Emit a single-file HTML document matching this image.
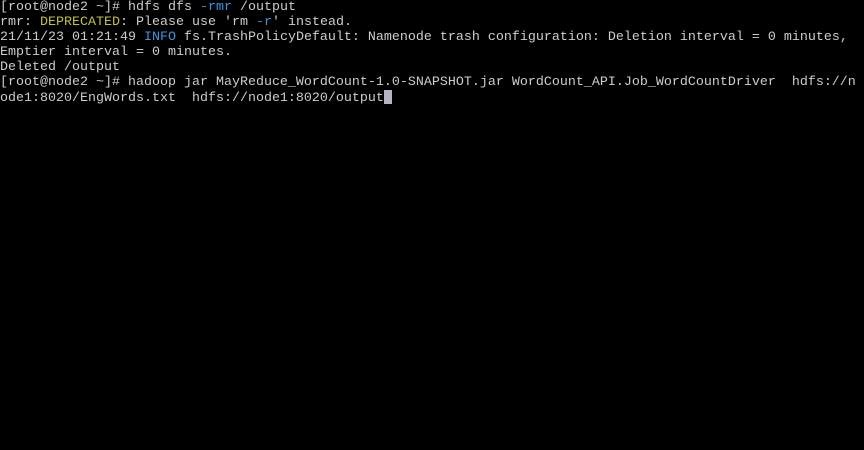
<!DOCTYPE html>
<html><head><meta charset="utf-8"><style>
html,body{margin:0;padding:0;background:#000;width:864px;height:450px;overflow:hidden}
pre{margin:0;padding:0 0 0 0;font-family:"Liberation Mono","DejaVu Sans Mono",monospace;font-size:13.33px;line-height:15px;color:#cccccc;white-space:pre;position:relative;top:0}
.y{color:#c1c13a}.b{color:#3a96dd}
.c{display:inline-block;width:8px;height:14px;background:#b4b4c0;vertical-align:-3px}
</style></head><body><pre>[root@node2 ~]# hdfs dfs <span class="b">-rmr</span> /output
rmr: <span class="y">DEPRECATED</span>: Please use 'rm <span class="b">-r</span>' instead.
21/11/23 01:21:49 <span class="b">INFO</span> fs.TrashPolicyDefault: Namenode trash configuration: Deletion interval = 0 minutes,
Emptier interval = 0 minutes.
Deleted /output
[root@node2 ~]# hadoop jar MayReduce_WordCount-1.0-SNAPSHOT.jar WordCount_API.Job_WordCountDriver  hdfs://n
ode1:8020/EngWords.txt  hdfs://node1:8020/output<span class="c"></span></pre></body></html>
